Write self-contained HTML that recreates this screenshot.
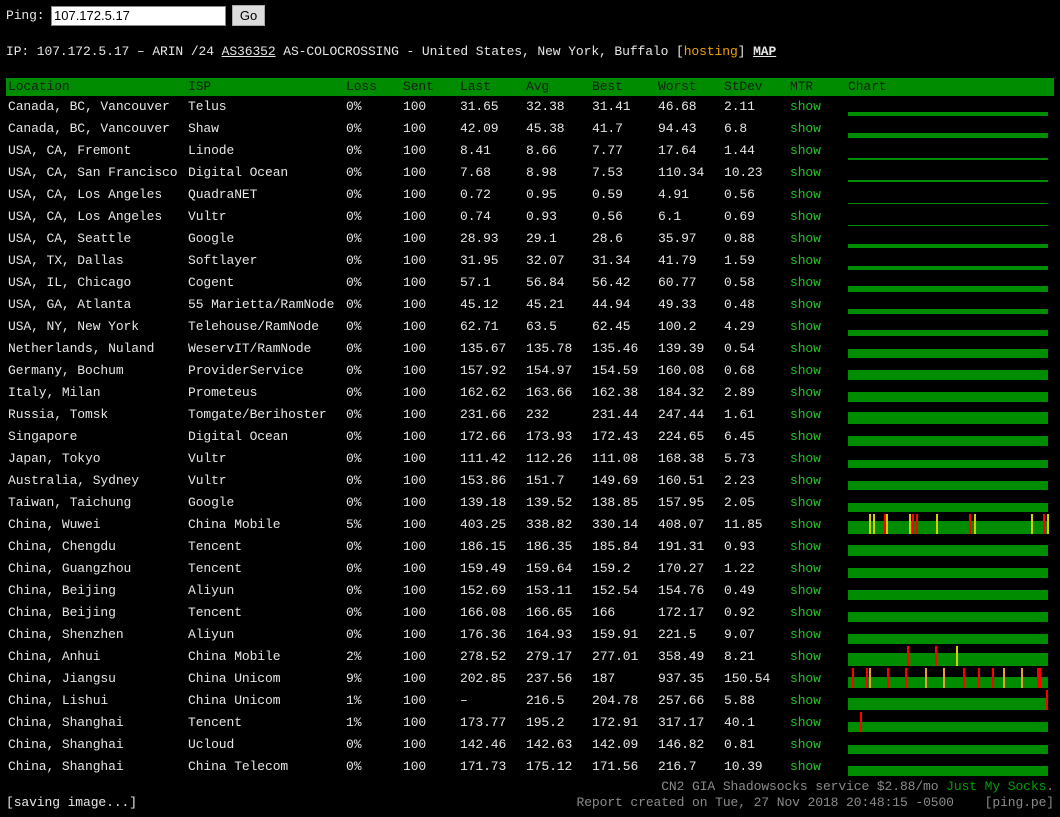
<!DOCTYPE html>
<html><head><meta charset="utf-8"><style>
body{margin:0;background:#000;width:1060px;height:817px;overflow:hidden;font-family:"Liberation Mono",monospace;font-size:13px;letter-spacing:-0.1px;color:#e6e6e6;position:relative}
.abs{position:absolute;white-space:pre}
#inp{position:absolute;left:51px;top:6px;width:171px;height:18px;background:#fff;border:1px solid #888;color:#000;font-family:"Liberation Sans",sans-serif;font-size:13px;letter-spacing:0;line-height:18px;padding-left:2px;box-sizing:content-box}
#go{position:absolute;left:232px;top:5px;width:33px;height:21px;background:#ddd;border:1px solid #aaa;box-sizing:border-box;color:#000;font-family:"Liberation Sans",sans-serif;font-size:13px;letter-spacing:0;text-align:center;line-height:19px}
u{color:#e6e6e6}
.hdr{position:absolute;left:6px;top:78px;width:1048px;height:18px;background:#008c00;color:#102010}
.row{position:absolute;left:0;height:22px;width:1060px}
.c{position:absolute;top:1px;line-height:22px;white-space:pre}
.hdr .c{line-height:18px;top:0}
.sh{color:#22c422}
.ch{position:absolute;left:848px;top:0;width:200px;height:22px}
.bar{position:absolute;left:0;width:200px;bottom:1px;background:#008c00}
.sp{position:absolute;width:2px;bottom:1px}
.r{background:#f00}.y{background:#d4d000}.o{background:#e8a030}
</style></head><body>
<div class="abs" style="left:6px;top:7px;line-height:18px">Ping:</div>
<div id="inp">107.172.5.17</div>
<div id="go">Go</div>
<div class="abs" style="left:6px;top:43px;line-height:18px">IP: 107.172.5.17 – ARIN /24 <u>AS36352</u> AS-COLOCROSSING - United States, New York, Buffalo [<span style="color:#f0a000">hosting</span>] <u style="font-weight:bold">MAP</u></div>
<div class="hdr">
<span class="c" style="left:2px">Location</span><span class="c" style="left:182px">ISP</span><span class="c" style="left:340px">Loss</span><span class="c" style="left:397px">Sent</span><span class="c" style="left:454px">Last</span><span class="c" style="left:520px">Avg</span><span class="c" style="left:586px">Best</span><span class="c" style="left:652px">Worst</span><span class="c" style="left:718px">StDev</span><span class="c" style="left:784px">MTR</span><span class="c" style="left:842px">Chart</span>
</div>
<div id="rows"></div>
<script>
var d=[
["Canada, BC, Vancouver","Telus","0%","100","31.65","32.38","31.41","46.68","2.11",4],
["Canada, BC, Vancouver","Shaw","0%","100","42.09","45.38","41.7","94.43","6.8",5],
["USA, CA, Fremont","Linode","0%","100","8.41","8.66","7.77","17.64","1.44",2],
["USA, CA, San Francisco","Digital Ocean","0%","100","7.68","8.98","7.53","110.34","10.23",2],
["USA, CA, Los Angeles","QuadraNET","0%","100","0.72","0.95","0.59","4.91","0.56",1],
["USA, CA, Los Angeles","Vultr","0%","100","0.74","0.93","0.56","6.1","0.69",1],
["USA, CA, Seattle","Google","0%","100","28.93","29.1","28.6","35.97","0.88",4],
["USA, TX, Dallas","Softlayer","0%","100","31.95","32.07","31.34","41.79","1.59",4],
["USA, IL, Chicago","Cogent","0%","100","57.1","56.84","56.42","60.77","0.58",6],
["USA, GA, Atlanta","55 Marietta/RamNode","0%","100","45.12","45.21","44.94","49.33","0.48",5],
["USA, NY, New York","Telehouse/RamNode","0%","100","62.71","63.5","62.45","100.2","4.29",6],
["Netherlands, Nuland","WeservIT/RamNode","0%","100","135.67","135.78","135.46","139.39","0.54",9],
["Germany, Bochum","ProviderService","0%","100","157.92","154.97","154.59","160.08","0.68",10],
["Italy, Milan","Prometeus","0%","100","162.62","163.66","162.38","184.32","2.89",10],
["Russia, Tomsk","Tomgate/Berihoster","0%","100","231.66","232","231.44","247.44","1.61",12],
["Singapore","Digital Ocean","0%","100","172.66","173.93","172.43","224.65","6.45",10],
["Japan, Tokyo","Vultr","0%","100","111.42","112.26","111.08","168.38","5.73",8],
["Australia, Sydney","Vultr","0%","100","153.86","151.7","149.69","160.51","2.23",9],
["Taiwan, Taichung","Google","0%","100","139.18","139.52","138.85","157.95","2.05",9],
["China, Wuwei","China Mobile","5%","100","403.25","338.82","330.14","408.07","11.85",13],
["China, Chengdu","Tencent","0%","100","186.15","186.35","185.84","191.31","0.93",11],
["China, Guangzhou","Tencent","0%","100","159.49","159.64","159.2","170.27","1.22",10],
["China, Beijing","Aliyun","0%","100","152.69","153.11","152.54","154.76","0.49",10],
["China, Beijing","Tencent","0%","100","166.08","166.65","166","172.17","0.92",10],
["China, Shenzhen","Aliyun","0%","100","176.36","164.93","159.91","221.5","9.07",10],
["China, Anhui","China Mobile","2%","100","278.52","279.17","277.01","358.49","8.21",13],
["China, Jiangsu","China Unicom","9%","100","202.85","237.56","187","937.35","150.54",11],
["China, Lishui","China Unicom","1%","100","–","216.5","204.78","257.66","5.88",12],
["China, Shanghai","Tencent","1%","100","173.77","195.2","172.91","317.17","40.1",10],
["China, Shanghai","Ucloud","0%","100","142.46","142.63","142.09","146.82","0.81",9],
["China, Shanghai","China Telecom","0%","100","171.73","175.12","171.56","216.7","10.39",10]];
var sp={19:[["r",[884,912,916,969,1043]],["y",[869,873,886,909,936,974,1031,1047]],1],
25:[["r",[907,935]],["y",[956]],1],
26:[["r",[852,866,887,905,963,978,992,1037,1039]],["o",[869,925,943,1003,1021]],1],
27:[["r",[1046]],1],
28:[["r",[860]],1]};
var xs=[8,188,346,403,460,526,592,658,724];
var h="";
for(var i=0;i<d.length;i++){var r=d[i];
h+='<div class="row" style="top:'+(95+22*i)+'px">';
for(var j=0;j<9;j++)h+='<span class="c" style="left:'+xs[j]+'px">'+r[j]+'</span>';
h+='<span class="c sh" style="left:790px">show</span><div class="ch"><div class="bar" style="height:'+r[9]+'px"></div>';
if(sp[i]){var s=sp[i];for(var k=0;k<s.length-1;k++){var cl=s[k][0];s[k][1].forEach(function(x){h+='<div class="sp '+cl+'" style="left:'+(x-848)+'px;height:20px"></div>';});}}
h+='</div></div>';}
document.getElementById("rows").innerHTML=h;
</script>
<div class="abs" style="right:6px;top:779px;line-height:16px;color:#8a8a8a">CN2 GIA Shadowsocks service $2.88/mo <span style="color:#00a000">Just My Socks</span>.</div>
<div class="abs" style="left:6px;top:795px;line-height:16px">[saving image...]</div>
<div class="abs" style="right:6px;top:795px;line-height:16px;color:#8a8a8a">Report created on Tue, 27 Nov 2018 20:48:15 -0500    [ping.pe]</div>
</body></html>
